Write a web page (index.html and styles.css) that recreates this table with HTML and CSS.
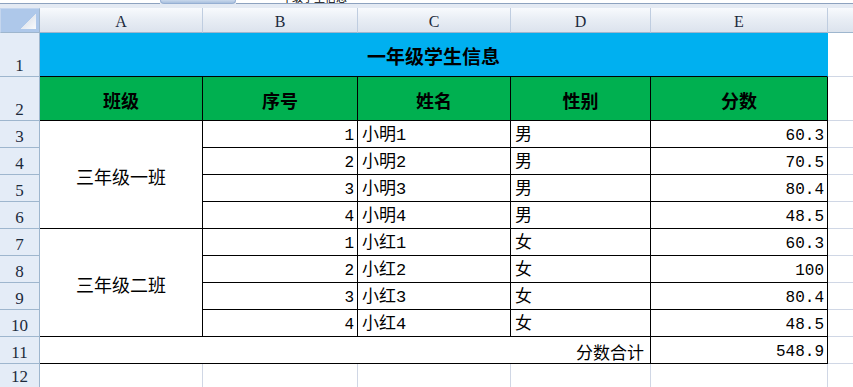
FILE: index.html
```html
<!DOCTYPE html>
<html lang="zh-CN">
<head>
<meta charset="utf-8">
<title>一年级学生信息</title>
<link rel="stylesheet" href="styles.css">
</head>
<body>
<div class="sheet">
  <div class="topbar">
    <div class="namebox"></div>
    <div class="tab"></div>
    <div class="formula"><span class="formula-text">一年级学生信息</span></div>
  </div>

  <div class="corner"><span class="corner-tri"></span></div>
  <div class="ch">A</div>
  <div class="ch">B</div>
  <div class="ch">C</div>
  <div class="ch">D</div>
  <div class="ch">E</div>
  <div class="ch ch-rest"></div>

  <div class="rh">1</div>
  <div class="title">一年级学生信息</div>
  <div class="gl"></div>

  <div class="rh">2</div>
  <div class="hd">班级</div>
  <div class="hd">序号</div>
  <div class="hd">姓名</div>
  <div class="hd">性别</div>
  <div class="hd">分数</div>
  <div class="gl"></div>

  <div class="rh">3</div>
  <div class="cls">三年级一班</div>
  <div class="num">1</div><div class="txt">小明1</div><div class="txt">男</div><div class="num">60.3</div><div class="gl"></div>
  <div class="rh">4</div>
  <div class="num">2</div><div class="txt">小明2</div><div class="txt">男</div><div class="num">70.5</div><div class="gl"></div>
  <div class="rh">5</div>
  <div class="num">3</div><div class="txt">小明3</div><div class="txt">男</div><div class="num">80.4</div><div class="gl"></div>
  <div class="rh">6</div>
  <div class="num">4</div><div class="txt">小明4</div><div class="txt">男</div><div class="num">48.5</div><div class="gl"></div>

  <div class="rh">7</div>
  <div class="cls">三年级二班</div>
  <div class="num">1</div><div class="txt">小红1</div><div class="txt">女</div><div class="num">60.3</div><div class="gl"></div>
  <div class="rh">8</div>
  <div class="num">2</div><div class="txt">小红2</div><div class="txt">女</div><div class="num">100</div><div class="gl"></div>
  <div class="rh">9</div>
  <div class="num">3</div><div class="txt">小红3</div><div class="txt">女</div><div class="num">80.4</div><div class="gl"></div>
  <div class="rh">10</div>
  <div class="num">4</div><div class="txt">小红4</div><div class="txt">女</div><div class="num">48.5</div><div class="gl"></div>

  <div class="rh">11</div>
  <div class="total">分数合计</div>
  <div class="num">548.9</div>
  <div class="gl"></div>

  <div class="rh rh-last">12</div>
  <div class="empty"></div>
  <div class="empty"></div>
  <div class="empty"></div>
  <div class="empty"></div>
  <div class="empty"></div>
  <div class="empty empty-rest"></div>
</div>
</body>
</html>
```

FILE: styles.css
```css
html, body {
  margin: 0;
  padding: 0;
  background: #ffffff;
  overflow: hidden;
}

.sheet {
  width: 853px;
  height: 387px;
  display: grid;
  grid-template-columns: 40px 163px 155px 153px 140px 177px 1fr;
  grid-template-rows: 8px 25px 44px 44px repeat(9, 27px) 23px;
  font-family: "Liberation Mono", "Noto Sans CJK SC", monospace;
  color: #000000;
}

.sheet > div {
  box-sizing: border-box;
  min-width: 0;
  min-height: 0;
}

/* top strip (formula bar remnant) */
.topbar {
  grid-column: 1 / -1;
  background: #e4eaf3;
  display: flex;
  align-items: flex-start;
}

.namebox {
  width: 160px;
  height: 4px;
  background: #ffffff;
  border-bottom: 1px solid #8da2bf;
  box-sizing: border-box;
}

.tab {
  width: 76px;
  height: 4px;
  box-sizing: border-box;
  background: linear-gradient(#c9d8ec, #a9c0de);
  border: 1px solid #96afd2;
  border-top: none;
  border-radius: 0 0 9px 9px;
}

.formula {
  flex: 1;
  height: 4px;
  box-sizing: border-box;
  background: #ffffff;
  border-bottom: 1px solid #8da2bf;
  overflow: hidden;
  padding-left: 34px;
}

.formula-text {
  display: block;
  font-family: "Noto Sans CJK SC", sans-serif;
  font-size: 11px;
  line-height: 11px;
  margin-top: -8px;
  color: #000000;
}

/* headers */
.corner {
  background: #aec8ea;
  border-right: 1px solid #9eb6ce;
  border-bottom: 1px solid #9eb6ce;
  border-top: 1px solid #c5d6ee;
  border-left: 1px solid #c5d6ee;
  display: flex;
  justify-content: flex-end;
  align-items: flex-end;
  padding: 0 3px 3px 0;
}

.corner-tri {
  display: block;
  width: 16px;
  height: 15px;
  background: linear-gradient(to bottom right, transparent 50%, #e4e9f0 50%, #f9fbfd 100%);
}

.ch {
  background: linear-gradient(#f8fafd, #e9eef5 45%, #dce3ed);
  border-right: 1px solid #bfcde0;
  border-bottom: 1px solid #9eb6ce;
  display: flex;
  align-items: center;
  justify-content: center;
  padding-top: 3px;
  font-family: "Liberation Serif", serif;
  font-size: 16px;
  color: #1c2a3c;
}

.ch-rest {
  border-right: none;
}

.rh {
  background: #e4ecf7;
  border-right: 1px solid #9eb6ce;
  border-bottom: 1px solid #9eb6ce;
  display: flex;
  align-items: flex-end;
  justify-content: center;
  font-family: "Liberation Serif", serif;
  font-size: 17px;
  line-height: 17px;
  padding-bottom: 2px;
  color: #1c2a3c;
}

.rh-last {
  border-bottom: none;
}

/* title row */
.title {
  grid-column: span 5;
  background: #00b0f0;
  border-right: 1px solid #00b0f0;
  border-bottom: 1px solid #000000;
  display: flex;
  align-items: center;
  justify-content: center;
  font-family: "Noto Sans CJK SC", sans-serif;
  font-weight: 700;
  font-size: 19px;
  padding-top: 1px;
}

.hd {
  background: #00b050;
  border-right: 1px solid #000000;
  border-bottom: 1px solid #000000;
  display: flex;
  align-items: center;
  justify-content: center;
  font-family: "Noto Sans CJK SC", sans-serif;
  font-weight: 700;
  font-size: 18px;
  padding-top: 2px;
}

/* body cells */
.cls {
  grid-row: span 4;
  border-right: 1px solid #000000;
  border-bottom: 1px solid #000000;
  display: flex;
  align-items: center;
  justify-content: center;
  font-family: "Noto Sans CJK SC", sans-serif;
  font-size: 18px;
  padding-top: 3px;
}

.num,
.txt,
.total {
  border-right: 1px solid #000000;
  border-bottom: 1px solid #000000;
  display: flex;
  align-items: flex-end;
  line-height: 18px;
  padding-bottom: 2px;
  white-space: nowrap;
}

.num {
  justify-content: flex-end;
  padding-right: 3px;
  font-size: 16px;
}

.txt {
  justify-content: flex-start;
  padding-left: 4px;
  font-size: 17px;
}

.total {
  grid-column: span 4;
  justify-content: flex-end;
  padding-right: 6px;
  font-family: "Noto Sans CJK SC", sans-serif;
  font-size: 17px;
}

/* gridline-only cells */
.gl {
  border-bottom: 1px solid #d0d7e5;
  background: #ffffff;
}

.empty {
  border-right: 1px solid #d0d7e5;
  background: #ffffff;
}

.empty-rest {
  border-right: none;
}
```
